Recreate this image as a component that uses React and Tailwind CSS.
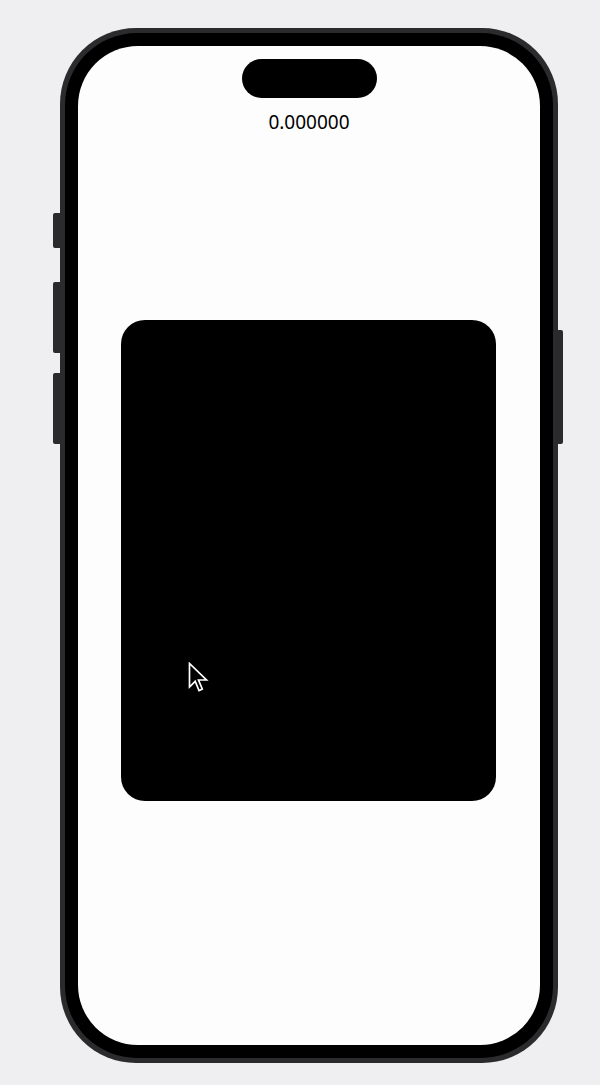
export default function App() {
  return (
    <div className="w-[600px] h-[1085px] bg-[#efeef0] pl-[60px] pt-[28px] overflow-hidden" style={{ fontFamily: '"Noto Sans", Inter, sans-serif' }}>
      <div className="relative w-[498px] h-[1035px]">
        {/* side buttons */}
        <div className="absolute left-[-7px] top-[185px] w-[7px] h-[35px] rounded-l-[2px] bg-[#2a2a2c]" />
        <div className="absolute left-[-7px] top-[254px] w-[7px] h-[71px] rounded-l-[2px] bg-[#2a2a2c]" />
        <div className="absolute left-[-7px] top-[345px] w-[7px] h-[71px] rounded-l-[2px] bg-[#2a2a2c]" />
        <div className="absolute right-[-5px] top-[302px] w-[6px] h-[114px] rounded-r-[2px] bg-[#2a2a2c]" />
        <div className="w-full h-full rounded-[76px] bg-[#2b2a2d] p-[5px]">
          <div className="w-full h-full rounded-[72px] bg-black p-[13px]">
            <div className="w-full h-full rounded-[60px] bg-[#fefdfe] flex flex-col items-center">
              <div className="mt-[13px] w-[135px] h-[39px] rounded-full bg-black" />
              <div className="mt-[10px] text-[19px] leading-[28px] text-black">0.000000</div>
              <div className="relative mt-[184px] mr-[2px] w-[375px] h-[481px] rounded-[24px] bg-black">
                <svg className="absolute left-[67px] top-[342px]" width="22" height="33" viewBox="0 0 22 33">
                  <path d="M1.5 1.5 L1.5 25 L7.2 19.3 L11 28.5 L14.3 27 L10.5 18 L18.5 18 Z" fill="black" stroke="white" strokeWidth="1.7" strokeLinejoin="miter" />
                </svg>
              </div>
            </div>
          </div>
        </div>
      </div>
    </div>
  );
}
